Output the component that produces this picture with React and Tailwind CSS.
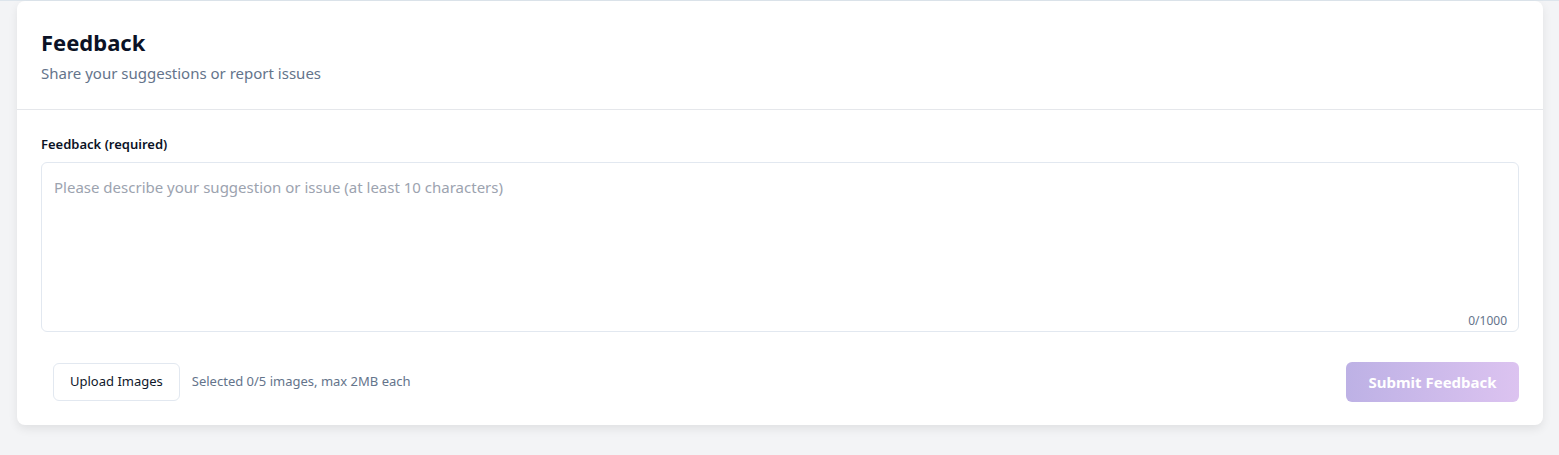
import React, { useState } from 'react';

const App = () => {
  const [text, setText] = useState('');

  return (
    <div
      className="min-h-[455px] bg-[#f3f4f6] border-t border-[#dde5ec] pl-[17px] pr-4"
      style={{ fontFamily: '"Noto Sans", "Open Sans", sans-serif' }}
    >
      <div className="bg-white rounded-lg shadow-[0_4px_10px_rgba(0,0,0,0.08)]">
        {/* Header */}
        <div className="px-6 pt-[25px] pb-[25px] border-b border-[#e5e7eb]">
          <h1 className="text-[22px] leading-8 font-bold text-[#0b1226]">Feedback</h1>
          <p className="mt-1 text-[15px] leading-[22px] text-[#64748b]">
            Share your suggestions or report issues
          </p>
        </div>

        {/* Body */}
        <div className="px-6 pt-6 pb-[23px]">
          <label className="block text-[13px] leading-5 font-semibold text-[#0b1226] mb-2">
            Feedback (required)
          </label>
          <div className="relative">
            <textarea
              value={text}
              onChange={(e) => setText(e.target.value)}
              maxLength={1000}
              placeholder="Please describe your suggestion or issue (at least 10 characters)"
              className="block w-full h-[170px] resize-none rounded-md border border-[#e2e8f0] px-3 py-3 text-[15px] leading-6 text-[#0f172a] placeholder:text-[#9ca3af] outline-none"
            />
            <span className="absolute right-3 bottom-0.5 text-[12px] text-[#64748b]">
              {text.length}/1000
            </span>
          </div>

          {/* Actions */}
          <div className="mt-[30px] flex items-center justify-between">
            <div className="ml-3 flex items-center gap-3">
              <button className="h-[38px] px-4 rounded-md border border-[#e2e8f0] bg-white text-[13px] text-[#0f172a]">
                Upload Images
              </button>
              <span className="text-[13px] text-[#64748b]">Selected 0/5 images, max 2MB each</span>
            </div>
            <button
              disabled
              className="h-10 w-[173px] rounded-md bg-gradient-to-r from-[#bdb1e5] to-[#dcc3f0] text-[15px] font-bold text-white"
            >
              Submit Feedback
            </button>
          </div>
        </div>
      </div>
    </div>
  );
};

export default App;
